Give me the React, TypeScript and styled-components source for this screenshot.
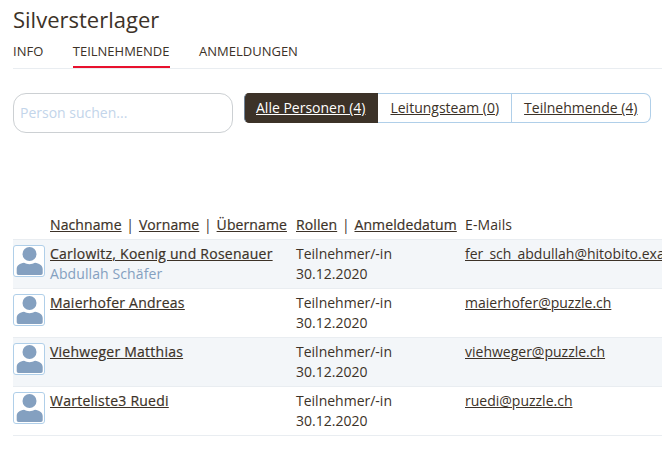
import React from "react";
import styled, { createGlobalStyle } from "styled-components";

const GlobalStyle = createGlobalStyle`
  html, body {
    margin: 0;
    padding: 0;
    background: #ffffff;
    overflow: hidden;
  }
  body {
    font-family: "Open Sans", "Liberation Sans", sans-serif;
    font-size: 14px;
    color: #3c3228;
  }
`;

const Page = styled.div`
  width: 662px;
  height: 469px;
  box-sizing: border-box;
  padding: 4px 0 0 13px;
  overflow: hidden;
`;

const Title = styled.h1`
  margin: 0;
  font-size: 22px;
  line-height: 30px;
  font-weight: 400;
  color: #3c3228;
`;

const Tabs = styled.nav`
  display: flex;
  gap: 29.5px;
  margin-top: 2px;
  border-bottom: 1px solid #e9edf1;
  height: 32px;
`;

const Tab = styled.div<{ active?: boolean }>`
  font-size: 13px;
  line-height: 20px;
  padding-top: 5px;
  height: 25px;
  text-transform: uppercase;
  color: #3c3228;
  border-bottom: 2px solid ${(props) => (props.active ? "#e8112d" : "transparent")};
`;

const Toolbar = styled.div`
  display: flex;
  align-items: flex-start;
  gap: 11px;
  margin-top: 24px;
`;

const Search = styled.input`
  width: 220px;
  height: 40px;
  box-sizing: border-box;
  padding: 0 6px 2px;
  border: 1px solid #ccd0d3;
  border-radius: 13px;
  font-family: inherit;
  font-size: 14px;
  outline: none;
  &::placeholder {
    color: #c3d5ea;
    opacity: 1;
  }
`;

const Group = styled.div`
  display: flex;
  height: 30px;
  white-space: nowrap;
`;

const Segment = styled.a<{ active?: boolean }>`
  display: flex;
  align-items: center;
  padding: 0 12px 2px;
  font-size: 14px;
  text-decoration: underline;
  color: ${(props) => (props.active ? "#ffffff" : "#3c3228")};
  background: ${(props) => (props.active ? "#3c3228" : "#ffffff")};
  border: 1px solid ${(props) => (props.active ? "#3c3228" : "#b0cfe9")};
  border-left-width: 0;
  &:first-child {
    border-left: 1px solid #6f8296;
    border-radius: 5px 0 0 5px;
    padding-left: 11px;
  }
  &:last-child {
    border-radius: 0 7px 7px 0;
  }
`;

const List = styled.div`
  margin-top: 81px;
  width: 700px;
`;

const HeaderRow = styled.div`
  display: grid;
  grid-template-columns: 37px 246px 169px 1fr;
  height: 24px;
  padding-top: 1px;
  line-height: 20px;
  font-size: 14px;
`;

const Row = styled.div<{ striped?: boolean }>`
  display: grid;
  grid-template-columns: 37px 246px 169px 1fr;
  height: 48px;
  border-top: 1px solid #e9edf1;
  background: ${(props) => (props.striped ? "#f3f6f9" : "#ffffff")};
  line-height: 20px;
  font-size: 14px;
  &:last-child {
    border-bottom: 1px solid #e9edf1;
  }
`;

const HeaderCell = styled.div<{ column: number }>`
  grid-column: ${(props) => props.column};
  white-space: nowrap;
  letter-spacing: 0.1px;
`;

const Cell = styled.div`
  padding-top: 4px;
  white-space: nowrap;
`;

const Link = styled.a`
  color: #3c3228;
  text-decoration: underline;
`;

const NameLink = styled(Link)`
  letter-spacing: 0.24px;
  -webkit-text-stroke: 0.2px #3c3228;
`;

const SortLink = styled(Link)`
  -webkit-text-stroke: 0.2px #3c3228;
`;

const Sep = styled.span`
  margin: 0 1px;
  color: #3c3228;
`;

const Nick = styled.div`
  color: #84a0c0;
  letter-spacing: 0.1px;
`;

const AvatarBox = styled.div`
  width: 32px;
  height: 32px;
  margin-top: 5px;
  box-sizing: border-box;
  border: 1px solid #b0cfe9;
  border-radius: 3px;
  background: #ffffff;
  overflow: hidden;
`;

const AvatarIcon = styled.svg`
  display: block;
`;

const Avatar = () => (
  <AvatarBox>
    <AvatarIcon width="30" height="30" viewBox="0 0 30 30">
      <circle cx="15.5" cy="8" r="7" fill="#84a0c0" />
      <path d="M2.7 27V23C2.7 19.5 6 17.3 10 16.8C13 18.6 18 18.6 21 16.8C25 17.3 28.7 19.5 28.7 23V27C28.7 28.2 28 29 27 29H4.5C3.5 29 2.7 28.2 2.7 27Z" fill="#84a0c0" />
    </AvatarIcon>
  </AvatarBox>
);

const people = [
  { name: "Carlowitz, Koenig und Rosenauer", nick: "Abdullah Schäfer", mail: "fer_sch_abdullah@hitobito.example.com" },
  { name: "Maierhofer Andreas", mail: "maierhofer@puzzle.ch" },
  { name: "Viehweger Matthias", mail: "viehweger@puzzle.ch" },
  { name: "Warteliste3 Ruedi", mail: "ruedi@puzzle.ch" },
];

export default function App() {
  return (
    <Page>
      <GlobalStyle />
      <Title>Silversterlager</Title>
      <Tabs>
        <Tab>Info</Tab>
        <Tab active>Teilnehmende</Tab>
        <Tab>Anmeldungen</Tab>
      </Tabs>
      <Toolbar>
        <Search placeholder="Person suchen..." />
        <Group>
          <Segment active>Alle Personen (4)</Segment>
          <Segment>Leitungsteam (0)</Segment>
          <Segment>Teilnehmende (4)</Segment>
        </Group>
      </Toolbar>
      <List>
        <HeaderRow>
          <HeaderCell column={2}>
            <SortLink>Nachname</SortLink> <Sep>|</Sep> <SortLink>Vorname</SortLink> <Sep>|</Sep> <SortLink>Übername</SortLink>
          </HeaderCell>
          <HeaderCell column={3}>
            <SortLink>Rollen</SortLink> <Sep>|</Sep> <SortLink>Anmeldedatum</SortLink>
          </HeaderCell>
          <HeaderCell column={4}>E-Mails</HeaderCell>
        </HeaderRow>
        {people.map((person, index) => (
          <Row key={person.name} striped={index % 2 === 0}>
            <Avatar />
            <Cell>
              <NameLink>{person.name}</NameLink>
              {person.nick && <Nick>{person.nick}</Nick>}
            </Cell>
            <Cell>
              <div>Teilnehmer/-in</div>
              <div>30.12.2020</div>
            </Cell>
            <Cell>
              <Link>{person.mail}</Link>
            </Cell>
          </Row>
        ))}
      </List>
    </Page>
  );
}
